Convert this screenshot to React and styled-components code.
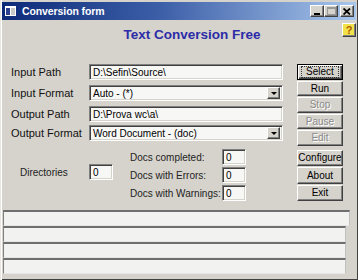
import React from "react";
import styled, { createGlobalStyle, css } from "styled-components";

const Global = createGlobalStyle`
	html, body {
		margin: 0;
		padding: 0;
		background: #d6d3cc;
	}
	body {
		font-family: "Liberation Sans", Arial, sans-serif;
		font-size: 11px;
		color: #000;
	}
`;

const sunken = css`
	box-sizing: border-box;
	border-top: 1px solid #808080;
	border-left: 1px solid #808080;
	border-bottom: 1px solid #fff;
	border-right: 1px solid #fff;
	box-shadow: inset 1px 1px 0 #404040, inset -1px -1px 0 #d6d3cc;
	background: #f7f7f5;
`;

const raised = css`
	box-sizing: border-box;
	border-top: 1px solid #fff;
	border-left: 1px solid #fff;
	border-bottom: 1px solid #404040;
	border-right: 1px solid #404040;
	box-shadow: inset -1px -1px 0 #808080;
	background: #d6d3cc;
`;

const ConversionForm = () => {
	return (
		<Window>
			<Global />
			<TitleBar>
				<AppIcon>
					<svg width="11" height="10" viewBox="0 0 11 10">
						<rect x="0" y="0" width="11" height="10" fill="#fff" />
						<rect x="1" y="2" width="4" height="7" fill="#2b3f8f" />
						<rect x="6" y="2" width="4" height="7" fill="#c8c8c8" />
					</svg>
				</AppIcon>
				<Title>Conversion form</Title>
				<Controls>
					<CtrlButton>
						<svg width="7" height="7" viewBox="0 0 7 7">
							<rect x="0" y="5" width="6" height="2" fill="#000" />
						</svg>
					</CtrlButton>
					<CtrlButton disabled>
						<svg width="9" height="8" viewBox="0 0 9 8">
							<rect x="0.5" y="0.5" width="8" height="7" fill="none" stroke="#9a9a9a" />
							<rect x="0.5" y="0.5" width="8" height="1.5" fill="#9a9a9a" />
						</svg>
					</CtrlButton>
					<CtrlButton close>
						<svg width="8" height="7" viewBox="0 0 8 7">
							<path d="M0.5 0.5 L7 6.5 M7 0.5 L0.5 6.5" stroke="#000" strokeWidth="1.8" />
						</svg>
					</CtrlButton>
				</Controls>
			</TitleBar>

			<Header>
				<Heading>Text Conversion Free</Heading>
				<HelpButton>?</HelpButton>
			</Header>

			<Main>
				<LeftArea>
					<FieldRow>
						<Label>Input Path</Label>
						<TextBox>D:\Sefin\Source\</TextBox>
					</FieldRow>
					<FieldRow gap={5}>
						<Label>Input Format</Label>
						<Combo>
							<span>Auto - (*)</span>
							<DropButton>
								<Arrow />
							</DropButton>
						</Combo>
					</FieldRow>
					<FieldRow gap={5}>
						<Label>Output Path</Label>
						<TextBox>D:\Prova wc\a\</TextBox>
					</FieldRow>
					<FieldRow gap={3}>
						<Label>Output Format</Label>
						<Combo>
							<span>Word Document - (doc)</span>
							<DropButton>
								<Arrow />
							</DropButton>
						</Combo>
					</FieldRow>

					<Stats>
						<DirBlock>
							<DirLabel>Directories</DirLabel>
							<CountBox>0</CountBox>
						</DirBlock>
						<DocsBlock>
							<DocsRow>
								<DocsLabel>Docs completed:</DocsLabel>
								<CountBox>0</CountBox>
							</DocsRow>
							<DocsRow>
								<DocsLabel>Docs with Errors:</DocsLabel>
								<CountBox>0</CountBox>
							</DocsRow>
							<DocsRow>
								<DocsLabel>Docs with Warnings:</DocsLabel>
								<CountBox>0</CountBox>
							</DocsRow>
						</DocsBlock>
					</Stats>
				</LeftArea>

				<ButtonColumn>
					<Button focused>
						<FocusRing>Select</FocusRing>
					</Button>
					<Button>Run</Button>
					<Button disabled>Stop</Button>
					<Button disabled>Pause</Button>
					<Button disabled>Edit</Button>
					<Spacer />
					<Button tall>Configure</Button>
					<Button tall>About</Button>
					<Button tall>Exit</Button>
				</ButtonColumn>
			</Main>

			<StatusArea>
				<StatusPanel />
				<StatusPanel short />
				<StatusPanel short />
				<StatusPanel short />
			</StatusArea>
		</Window>
	);
};

const Window = styled.div`
	width: 358px;
	height: 280px;
	box-sizing: border-box;
	display: flex;
	flex-direction: column;
	background: #d6d3cc;
	box-shadow: inset 1px 0 0 #e8e6e0, inset 2px 0 0 #fff, inset -1px 0 0 #404040, inset 0 -1px 0 #404040;
	overflow: hidden;
`;

const TitleBar = styled.div`
	margin: 2px 2px 0 2px;
	height: 18px;
	display: flex;
	align-items: center;
	padding: 0 2px 0 3px;
	background: linear-gradient(90deg, #0c2a78 0%, #3d5fa8 45%, #a8c6ec 100%);
`;

const AppIcon = styled.div`
	width: 12px;
	display: flex;
	align-items: center;
`;

const Title = styled.div`
	margin-left: 5px;
	color: #fff;
	font-weight: bold;
	font-size: 10.5px;
	letter-spacing: -0.1px;
	flex: 1;
`;

const Controls = styled.div`
	display: flex;
	gap: 0;
`;

const CtrlButton = styled.div`
	${raised};
	width: 14px;
	height: 12px;
	display: flex;
	align-items: center;
	justify-content: center;
	margin-left: ${(p) => (p.close ? "2px" : "0")};
`;

const Header = styled.div`
	height: 44px;
	display: flex;
	align-items: flex-start;
`;

const Heading = styled.h1`
	flex: 1;
	margin: 7px 0 0 0;
	padding-left: 42px;
	text-align: center;
	font-family: "Liberation Sans", Arial, sans-serif;
	font-size: 13.5px;
	font-weight: bold;
	color: #2c2ca8;
`;

const HelpButton = styled.div`
	${raised};
	margin: 3px 2px 0 0;
	width: 14px;
	height: 14px;
	background: #f2e24a;
	color: #b05a00;
	font-weight: bold;
	font-size: 11px;
	display: flex;
	align-items: center;
	justify-content: center;
`;

const Main = styled.div`
	display: flex;
	padding-left: 11px;
`;

const LeftArea = styled.div`
	width: 272px;
	display: flex;
	flex-direction: column;
`;

const FieldRow = styled.div`
	display: flex;
	align-items: center;
	height: 16px;
	margin-top: ${(p) => p.gap || 0}px;
`;

const Label = styled.div`
	width: 78px;
	font-size: 11px;
	color: #111;
`;

const TextBox = styled.div`
	${sunken};
	width: 194px;
	height: 16px;
	padding: 1px 0 0 3px;
	font-size: 10px;
	line-height: 13px;
	white-space: nowrap;
`;

const Combo = styled(TextBox)`
	display: flex;
	justify-content: space-between;
	padding-right: 2px;
	span {
		flex: 1;
	}
`;

const DropButton = styled.div`
	${raised};
	width: 13px;
	height: 12px;
	margin-top: 0;
	display: flex;
	align-items: center;
	justify-content: center;
`;

const Arrow = styled.div`
	width: 0;
	height: 0;
	border-left: 3px solid transparent;
	border-right: 3px solid transparent;
	border-top: 3px solid #000;
`;

const Stats = styled.div`
	display: flex;
	margin-top: 8px;
`;

const DirBlock = styled.div`
	width: 102px;
	display: flex;
	align-items: center;
	padding-top: 15px;
	align-self: flex-start;
	height: 16px;
	margin-top: 0;
`;

const DirLabel = styled.div`
	width: 69px;
	padding-left: 9px;
	font-size: 10px;
	color: #222;
`;

const DocsBlock = styled.div`
	display: flex;
	flex-direction: column;
	gap: 2px;
	margin-left: 17px;
`;

const DocsRow = styled.div`
	display: flex;
	align-items: center;
	height: 16px;
`;

const DocsLabel = styled.div`
	width: 92px;
	font-size: 10px;
	color: #222;
`;

const CountBox = styled(TextBox)`
	width: 24px;
`;

const ButtonColumn = styled.div`
	margin-left: 14px;
	width: 46px;
	display: flex;
	flex-direction: column;
	gap: 1px;
`;

const Spacer = styled.div`
	height: 2px;
`;

const Button = styled.div`
	${raised};
	height: ${(p) => (p.tall ? "16.5px" : "15.5px")};
	display: flex;
	align-items: center;
	justify-content: center;
	font-size: 10px;
	color: ${(p) => (p.disabled ? "#8a8a8a" : "#000")};
	text-shadow: ${(p) => (p.disabled ? "1px 1px 0 #fff" : "none")};
	${(p) =>
		p.focused &&
		css`
			border: 1px solid #000;
			box-shadow: inset 1px 1px 0 #fff, inset -1px -1px 0 #404040, inset -2px -2px 0 #808080;
		`}
`;

const FocusRing = styled.span`
	padding: 0 4px;
	outline: 1px dotted #333;
	outline-offset: 0;
	line-height: 10px;
`;

const StatusArea = styled.div`
	margin-top: auto;
	margin-bottom: 6px;
	padding-left: 3px;
	display: flex;
	flex-direction: column;
`;

const StatusPanel = styled.div`
	box-sizing: border-box;
	width: ${(p) => (p.short ? "343px" : "347px")};
	height: 16px;
	background: #f2f2f0;
	border-top: 2px solid #6f6f6f;
	border-left: 1px solid #808080;
	border-right: 1px solid #c0c0c0;
	border-bottom: 1px solid #e6e6e6;
`;

export default ConversionForm;
